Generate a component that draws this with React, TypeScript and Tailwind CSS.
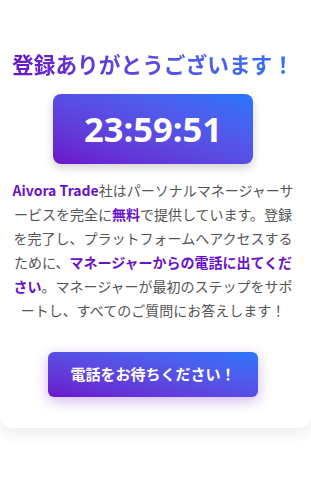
import React from "react";

export default function App() {
  const jp = { fontFamily: '"Noto Sans CJK JP", "Noto Sans", sans-serif' };
  return (
    <div className="min-h-[500px] w-[311px] bg-white" style={jp}>
      <div className="flex flex-col items-center bg-white pl-[11px] pr-[16px] pt-[48px] pb-[31px] rounded-b-[12px] shadow-[0_6px_14px_rgba(0,0,0,0.07)]">
        <h1 className="text-[21.7px] font-bold leading-[32px] bg-gradient-to-r from-[#6a11cb] to-[#2575fc] bg-clip-text text-transparent">
          登録ありがとうございます！
        </h1>
        <div className="mt-[14px] flex h-[70px] w-[200px] items-center justify-center rounded-[8px] bg-gradient-to-tr from-[#6a11cb] to-[#2575fc] shadow-[0_4px_10px_rgba(0,0,0,0.18)]">
          <span
            className="text-[34.5px] font-bold leading-none text-white"
            style={{ fontFamily: '"Open Sans", sans-serif' }}
          >
            23:59:51
          </span>
        </div>
        <p className="mt-[14px] text-center text-[14px] leading-[24px] text-[#555555]">
          <strong className="font-bold text-[#6a11cb]">Aivora Trade</strong>
          社はパーソナルマネージャーサービスを完全に
          <strong className="font-bold text-[#6a11cb]">無料</strong>
          で提供しています。登録を完了し、プラットフォームへアクセスするために、
          <strong className="font-bold text-[#6a11cb]">マネージャーからの電話に出てください</strong>
          。マネージャーが最初のステップをサポートし、すべてのご質問にお答えします！
        </p>
        <button className="mt-[30px] h-[45px] rounded-[6px] bg-gradient-to-tr from-[#6a11cb] to-[#2575fc] px-[22px] text-[15px] font-bold text-white shadow-[0_4px_14px_rgba(106,17,203,0.3)]">
          電話をお待ちください！
        </button>
      </div>
    </div>
  );
}
